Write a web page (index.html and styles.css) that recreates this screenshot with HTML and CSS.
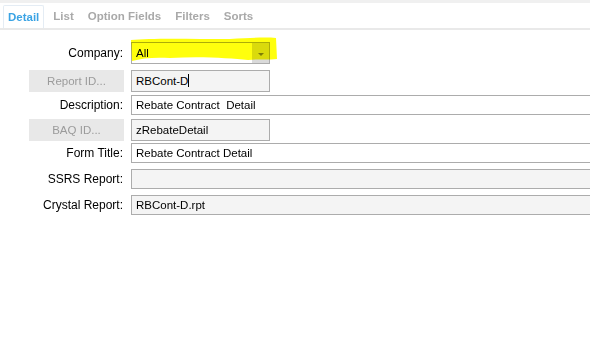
FILE: index.html
```html
<!DOCTYPE html>
<html lang="en">
<head>
    <meta charset="UTF-8">
    <meta name="viewport" content="width=device-width, initial-scale=1.0">
    <title>Report Style</title>
    <link rel="stylesheet" href="styles.css">
</head>
<body>
    <div class="top-band"></div>
    <div class="tabs">
        <div class="tab active">Detail</div>
        <div class="tab">List</div>
        <div class="tab">Option Fields</div>
        <div class="tab">Filters</div>
        <div class="tab">Sorts</div>
    </div>
    <div class="form">
        <div class="row row-company">
            <div class="label">Company:</div>
            <div class="combo">
                <span class="combo-text">All</span>
                <span class="combo-btn"><span class="arrow"></span></span>
                <svg class="marker" width="152" height="30" viewBox="0 0 152 30">
                    <path d="M1 3 C20 1 60 2 100 2 C120 1 135 0 146 1 L147 22 C140 23 128 22 118 23 C100 21 70 19 40 21 C25 20 12 21 2 24 Z" fill="#ffff00"/>
                </svg>
            </div>
        </div>
        <div class="row row-report">
            <div class="btn">Report ID...</div>
            <div class="field short grey">RBCont-D<span class="caret"></span></div>
        </div>
        <div class="row row-desc">
            <div class="label">Description:</div>
            <div class="field wide">Rebate Contract  Detail</div>
        </div>
        <div class="row row-baq">
            <div class="btn">BAQ ID...</div>
            <div class="field short grey">zRebateDetail</div>
        </div>
        <div class="row row-title">
            <div class="label">Form Title:</div>
            <div class="field wide">Rebate Contract Detail</div>
        </div>
        <div class="row row-ssrs">
            <div class="label">SSRS Report:</div>
            <div class="field wide grey"></div>
        </div>
        <div class="row row-crystal">
            <div class="label">Crystal Report:</div>
            <div class="field wide grey">RBCont-D.rpt</div>
        </div>
    </div>
</body>
</html>
```

FILE: styles.css
```css
body {
    margin: 0;
    background: #ffffff;
    font-family: "Liberation Sans", Arial, sans-serif;
    overflow: hidden;
}
.top-band {
    height: 3px;
    background: #f0f0f0;
}
.tabs {
    display: flex;
    height: 25px;
    border-bottom: 2px solid #e9e9e9;
    padding-left: 3px;
}
.tab {
    margin-top: 2px;
    padding: 0 7px;
    line-height: 23px;
    font-size: 11.5px;
    font-weight: bold;
    color: #a9a9a9;
}
.tab.active {
    padding: 0 4px;
    margin-right: 2px;
    color: #3aa3e4;
    border: 1px solid #e4ecf4;
    border-bottom: none;
    border-radius: 2px 2px 0 0;
}
.form {
    display: flex;
    flex-direction: column;
}
.row {
    display: grid;
    grid-template-columns: 124px 1fr;
    column-gap: 7px;
    align-items: center;
    font-size: 11.5px;
    color: #000000;
}
.row-company { margin-top: 12px; height: 22px; }
.row-report { margin-top: 6px; height: 22px; }
.row-desc { margin-top: 3px; height: 20px; }
.row-baq { margin-top: 4px; height: 22px; }
.row-title { margin-top: 2px; height: 20px; }
.row-ssrs { margin-top: 6px; height: 20px; }
.row-crystal { margin-top: 6px; height: 20px; }
.label {
    text-align: right;
    padding-right: 1px;
    font-size: 12px;
}
.btn {
    margin-left: 29px;
    height: 22px;
    line-height: 22px;
    background: #e8e8e8;
    color: #9b9b9b;
    text-align: center;
}
.field {
    box-sizing: border-box;
    height: 100%;
    border: 1px solid #acacac;
    background: #ffffff;
    padding-left: 4px;
    line-height: 18px;
    white-space: pre;
    position: relative;
}
.field.short {
    width: 139px;
    line-height: 20px;
}
.field.wide {
    margin-right: -12px;
}
.field.grey {
    background: #f4f4f4;
}
.caret {
    display: inline-block;
    width: 1px;
    height: 13px;
    background: #000000;
    vertical-align: -2px;
}
.combo {
    position: relative;
    box-sizing: border-box;
    width: 139px;
    height: 22px;
    border: 1px solid #acacac;
    background: #ffffff;
    display: flex;
    align-items: center;
}
.combo-text {
    flex: 1;
    padding-left: 4px;
}
.combo-btn {
    width: 17px;
    height: 100%;
    background: #dadada;
    display: flex;
    align-items: center;
    justify-content: center;
}
.arrow {
    width: 0;
    height: 0;
    border-left: 3px solid transparent;
    border-right: 3px solid transparent;
    border-top: 3px solid #7d7d7d;
    margin-top: 2px;
}
.marker {
    position: absolute;
    left: -2px;
    top: -6px;
    mix-blend-mode: multiply;
    opacity: 0.95;
}
```
